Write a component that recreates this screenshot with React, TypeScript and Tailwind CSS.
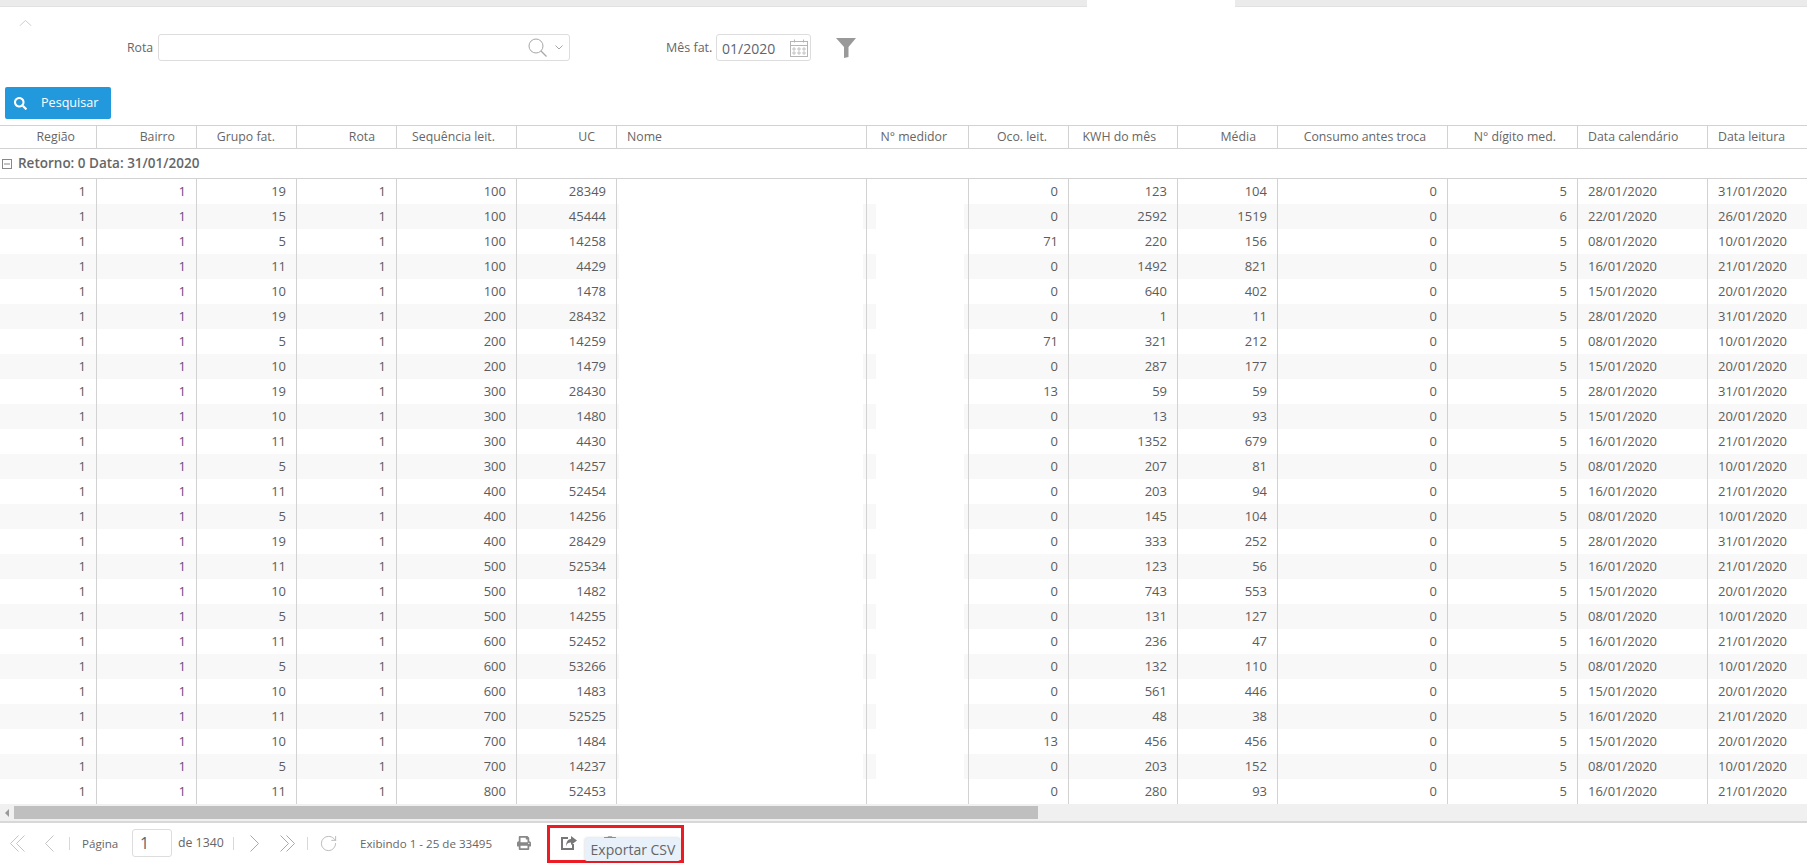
import { FaPrint, FaSearch, FaTrashAlt } from "react-icons/fa";
import { RotateCw } from "lucide-react";

type Row = [string, string, string, string, string, string, string, string, string];

const rows: Row[] = [
  ["19", "100", "28349", "0", "123", "104", "5", "28/01/2020", "31/01/2020"],
  ["15", "100", "45444", "0", "2592", "1519", "6", "22/01/2020", "26/01/2020"],
  ["5", "100", "14258", "71", "220", "156", "5", "08/01/2020", "10/01/2020"],
  ["11", "100", "4429", "0", "1492", "821", "5", "16/01/2020", "21/01/2020"],
  ["10", "100", "1478", "0", "640", "402", "5", "15/01/2020", "20/01/2020"],
  ["19", "200", "28432", "0", "1", "11", "5", "28/01/2020", "31/01/2020"],
  ["5", "200", "14259", "71", "321", "212", "5", "08/01/2020", "10/01/2020"],
  ["10", "200", "1479", "0", "287", "177", "5", "15/01/2020", "20/01/2020"],
  ["19", "300", "28430", "13", "59", "59", "5", "28/01/2020", "31/01/2020"],
  ["10", "300", "1480", "0", "13", "93", "5", "15/01/2020", "20/01/2020"],
  ["11", "300", "4430", "0", "1352", "679", "5", "16/01/2020", "21/01/2020"],
  ["5", "300", "14257", "0", "207", "81", "5", "08/01/2020", "10/01/2020"],
  ["11", "400", "52454", "0", "203", "94", "5", "16/01/2020", "21/01/2020"],
  ["5", "400", "14256", "0", "145", "104", "5", "08/01/2020", "10/01/2020"],
  ["19", "400", "28429", "0", "333", "252", "5", "28/01/2020", "31/01/2020"],
  ["11", "500", "52534", "0", "123", "56", "5", "16/01/2020", "21/01/2020"],
  ["10", "500", "1482", "0", "743", "553", "5", "15/01/2020", "20/01/2020"],
  ["5", "500", "14255", "0", "131", "127", "5", "08/01/2020", "10/01/2020"],
  ["11", "600", "52452", "0", "236", "47", "5", "16/01/2020", "21/01/2020"],
  ["5", "600", "53266", "0", "132", "110", "5", "08/01/2020", "10/01/2020"],
  ["10", "600", "1483", "0", "561", "446", "5", "15/01/2020", "20/01/2020"],
  ["11", "700", "52525", "0", "48", "38", "5", "16/01/2020", "21/01/2020"],
  ["10", "700", "1484", "13", "456", "456", "5", "15/01/2020", "20/01/2020"],
  ["5", "700", "14237", "0", "203", "152", "5", "08/01/2020", "10/01/2020"],
  ["11", "800", "52453", "0", "280", "93", "5", "16/01/2020", "21/01/2020"],
];

const columns = [
  { label: "Região", left: false },
  { label: "Bairro", left: false },
  { label: "Grupo fat.", left: false },
  { label: "Rota", left: false },
  { label: "Sequência leit.", left: false },
  { label: "UC", left: false },
  { label: "Nome", left: true },
  { label: "N° medidor", left: false },
  { label: "Oco. leit.", left: false },
  { label: "KWH do mês", left: false },
  { label: "Média", left: false },
  { label: "Consumo antes troca", left: false },
  { label: "N° dígito med.", left: false },
  { label: "Data calendário", left: true },
  { label: "Data leitura", left: true },
];

const gridCols =
  "grid w-[1838px] grid-cols-[97px_100px_100px_100px_120px_100px_250px_102px_100px_109px_100px_170px_130px_130px_130px]";
const numCell = "flex items-center justify-end border-r border-[#d2d2d2] pr-[10px]";
const dateCell = "flex items-center border-r border-[#d2d2d2] pl-[10px]";

function DataRow({ row, striped }: { row: Row; striped: boolean }) {
  const [grupo, seq, uc, oco, kwh, media, digito, dataCal, dataLeit] = row;
  return (
    <div className={`${gridCols} h-[25px] text-[13px] text-[#5c5c5c] ${striped ? "bg-[#f8f8f8]" : "bg-white"}`}>
      <div className={numCell}>1</div>
      <div className={numCell}>
        <span className="text-[#6d4a80]">1</span>
      </div>
      <div className={numCell}>{grupo}</div>
      <div className={numCell}>1</div>
      <div className={numCell}>{seq}</div>
      <div className={numCell}>{uc}</div>
      {/* nome e medidor tarjados no print */}
      <div className="border-r border-[#d2d2d2] pl-[2px] pr-[3px]">
        <div className="h-full bg-white" />
      </div>
      <div className="border-r border-[#d2d2d2] pl-[9px] pr-[4px]">
        <div className="h-full bg-white" />
      </div>
      <div className={numCell}>{oco}</div>
      <div className={numCell}>{kwh}</div>
      <div className={numCell}>{media}</div>
      <div className={numCell}>0</div>
      <div className={numCell}>{digito}</div>
      <div className={dateCell}>{dataCal}</div>
      <div className={dateCell}>{dataLeit}</div>
    </div>
  );
}

function ChevronLeftIcon({ double }: { double?: boolean }) {
  return (
    <svg width={double ? 16 : 11} height="17" viewBox={double ? "0 0 16 17" : "0 0 11 17"} fill="none" stroke="#c4c4c4" strokeWidth="1">
      <path d="M9.5 0.5 L1.5 8.5 L9.5 16.5" />
      {double && <path d="M15.5 0.5 L7.5 8.5 L15.5 16.5" />}
    </svg>
  );
}

function ChevronRightIcon({ double }: { double?: boolean }) {
  return (
    <svg width={double ? 16 : 10} height="17" viewBox={double ? "0 0 16 17" : "0 0 10 17"} fill="none" stroke="#a8a8a8" strokeWidth="1">
      <path d="M0.5 0.5 L8.5 8.5 L0.5 16.5" />
      {double && <path d="M6.5 0.5 L14.5 8.5 L6.5 16.5" />}
    </svg>
  );
}

function CalendarIcon() {
  return (
    <svg width="18" height="18" viewBox="0 0 18 18" fill="none" stroke="#b5b5b5" strokeWidth="1">
      <rect x="0.5" y="2.5" width="17" height="15" />
      <path d="M0.5 6.5 H17.5" />
      <path d="M4.5 0.5 V3.5 M13.5 0.5 V3.5" />
      <path
        d="M3 9 h2 v2 h-2 z M8 9 h2 v2 h-2 z M13 9 h2 v2 h-2 z M3 13 h2 v2 h-2 z M8 13 h2 v2 h-2 z M13 13 h2 v2 h-2 z"
        strokeWidth="0.8"
      />
    </svg>
  );
}

function ExportIcon() {
  return (
    <svg width="16" height="14" viewBox="0 0 16 14" fill="#777" className="ml-[30px]">
      <path d="M7 2 H1 V13 H12 V8" fill="none" stroke="#777" strokeWidth="2" />
      <path d="M10 0 L16 4.5 L10 9 V6.5 C7 6.5 5.5 8 5 10.5 C5 6 7 3 10 3 Z" />
    </svg>
  );
}

function Separator() {
  return <div className="h-[13px] w-px bg-[#d8d8d8]" />;
}

export default function App() {
  return (
    <div className="relative flex h-[863px] w-full flex-col overflow-hidden bg-white font-['Open_Sans',sans-serif] text-[#666]">
      {/* abas */}
      <div className="flex h-[7px] shrink-0">
        <div className="w-[1087px] border-b border-[#e2e2e2] bg-[#ebebeb]" />
        <div className="w-[148px] bg-white" />
        <div className="flex-1 border-b border-[#e2e2e2] bg-[#ebebeb]" />
      </div>

      {/* filtros */}
      <div className="h-[118px] shrink-0">
        <div className="pl-[19px] pt-[13px]">
          <svg width="13" height="6" viewBox="0 0 13 6" fill="none" stroke="#cfcfcf" strokeWidth="1" className="block">
            <path d="M0.5 6 L6.5 0.5 L12.5 6" />
          </svg>
        </div>
        <div className="mt-[8px] flex h-[27px] items-center pl-[127px] text-[12.3px]">
          <span className="mt-[1px] w-[31px]">Rota</span>
          <div className="flex h-full w-[412px] items-center justify-end rounded-[3px] border border-[#ddd] pr-[6px]">
            <svg width="19" height="19" viewBox="0 0 19 19" fill="none" stroke="#a6a6a6" strokeWidth="1" className="mr-[8px]">
              <circle cx="8" cy="8" r="7" />
              <path d="M13 13 L18.5 18.5" strokeWidth="1.3" />
            </svg>
            <svg width="8" height="5" viewBox="0 0 8 5" fill="none" stroke="#a6a6a6" strokeWidth="1">
              <path d="M0.5 0.5 L4 4 L7.5 0.5" />
            </svg>
          </div>
          <span className="ml-[96px] mt-[1px] w-[50px] text-[12.5px]">Mês fat.</span>
          <div className="flex h-full w-[95px] items-center justify-between rounded-[3px] border border-[#ddd] pl-[5px] pr-[2px]">
            <span className="mt-[1px] text-[14px] text-[#5c6470]">01/2020</span>
            <CalendarIcon />
          </div>
          <svg width="20" height="20" viewBox="0 0 20 20" fill="#999" className="ml-[25px]">
            <path d="M0 0 H20 L12.5 9 V19 L8 20 V9 Z" />
          </svg>
        </div>
        <button className="ml-[5px] mt-[26px] flex h-[32px] w-[106px] items-center rounded-[2px] bg-[#2299dd] pl-[9px] text-[12.6px] text-white">
          <FaSearch className="h-[13px] w-[13px]" />
          <span className="ml-[14px] mt-[1px]">Pesquisar</span>
        </button>
      </div>

      {/* tabela */}
      <div className="shrink-0 overflow-hidden">
        <div className={`${gridCols} h-[24px] border-y border-[#d2d2d2] text-[12.3px]`}>
          {columns.map((c) =>
            c.left ? (
              <div key={c.label} className="flex items-center border-r border-[#d2d2d2] pl-[10px] pt-[1px]">
                {c.label}
              </div>
            ) : (
              <div key={c.label} className="flex items-center justify-end border-r border-[#d2d2d2] pr-[21px] pt-[1px]">
                {c.label}
              </div>
            )
          )}
        </div>
        <div className="flex h-[30px] items-center border-b border-[#d2d2d2] pl-[2px]">
          <svg width="10" height="10" viewBox="0 0 10 10" fill="none" stroke="#888" strokeWidth="1">
            <rect x="0.5" y="0.5" width="9" height="9" />
            <path d="M2 5 H8" />
          </svg>
          <span className="ml-[6px] text-[13.5px] font-semibold text-[#666]">Retorno: 0 Data: 31/01/2020</span>
        </div>
        {rows.map((row, i) => (
          <DataRow key={row[2]} row={row} striped={i % 2 === 1} />
        ))}
      </div>

      {/* scroll horizontal */}
      <div className="flex h-[17px] shrink-0 items-center bg-[#f0f0f0]">
        <div className="flex w-[14px] justify-center">
          <div className="h-0 w-0 border-y-[4px] border-r-[4px] border-y-transparent border-r-[#999]" />
        </div>
        <div className="h-[13px] w-[1024px] bg-[#bfbfbf]" />
      </div>

      {/* paginação */}
      <div className="flex h-[42px] shrink-0 items-center border-t-2 border-[#d8d8d8] pl-[9px] text-[12.3px]">
        <ChevronLeftIcon double />
        <div className="ml-[19px]">
          <ChevronLeftIcon />
        </div>
        <div className="ml-[14px]">
          <Separator />
        </div>
        <span className="ml-[12px] mt-[1px] w-[50px] text-[11.6px]">Página</span>
        <div className="flex h-[28px] w-[40px] items-center rounded-[3px] border border-[#ddd] pl-[7px] text-[16px] text-[#5c6470]">1</div>
        <span className="ml-[6px] mt-[1px] w-[55px]">de 1340</span>
        <Separator />
        <div className="ml-[16px]">
          <ChevronRightIcon />
        </div>
        <div className="ml-[20px]">
          <ChevronRightIcon double />
        </div>
        <div className="ml-[11px]">
          <Separator />
        </div>
        <RotateCw className="ml-[11px] h-[19px] w-[19px] text-[#aaa]" strokeWidth={1} />
        <span className="ml-[22px] mt-[1px] w-[157px] text-[11.6px]">Exibindo 1 - 25 de 33495</span>
        <FaPrint className="h-[14px] w-[14px] text-[#888]" />
        <ExportIcon />
        <FaTrashAlt className="ml-[27px] h-[14px] w-[12px] text-[#999]" />
      </div>

      {/* destaque vermelho e tooltip */}
      <div className="absolute left-[547px] top-[825px] h-[38px] w-[137px] border-[3px] border-[#ed1c24]" />
      <div className="absolute left-[585px] top-[838px] flex h-[23px] w-[95px] items-center justify-center rounded-[2px] bg-[#e8f1f9] pl-[1px] text-[14px] text-[#666] shadow-[0_0_3px_rgba(0,0,0,0.2)]">
        Exportar CSV
      </div>
    </div>
  );
}
